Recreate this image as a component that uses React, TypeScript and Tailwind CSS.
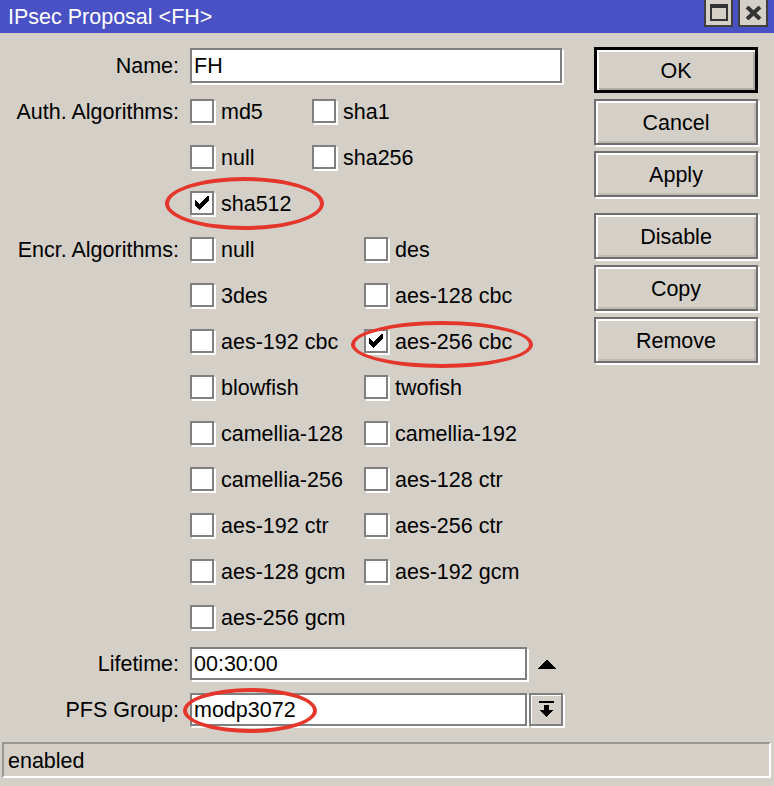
import React from "react";

type Item = { label: string; checked?: boolean };

const authRows: Item[][] = [
  [{ label: "md5" }, { label: "sha1" }],
  [{ label: "null" }, { label: "sha256" }],
  [{ label: "sha512", checked: true }],
];

const encrRows: Item[][] = [
  [{ label: "null" }, { label: "des" }],
  [{ label: "3des" }, { label: "aes-128 cbc" }],
  [{ label: "aes-192 cbc" }, { label: "aes-256 cbc", checked: true }],
  [{ label: "blowfish" }, { label: "twofish" }],
  [{ label: "camellia-128" }, { label: "camellia-192" }],
  [{ label: "camellia-256" }, { label: "aes-128 ctr" }],
  [{ label: "aes-192 ctr" }, { label: "aes-256 ctr" }],
  [{ label: "aes-128 gcm" }, { label: "aes-192 gcm" }],
  [{ label: "aes-256 gcm" }],
];

// glyphs sit high in the line box, nudge text down to match the boxes
const txt = "pt-[4px]";

function CheckBox({ checked }: { checked?: boolean }) {
  return (
    <div className="w-6 h-6 shrink-0 bg-white border-2 border-[#808080] shadow-[2px_2px_0_#fff] flex items-center justify-center">
      {checked && (
        <svg width="14" height="14" viewBox="0 0 7 7" shapeRendering="crispEdges">
          <polygon points="0,2 2,4 6,0 7,0 7,2 3,6 2,7 0,5" fill="#000" />
        </svg>
      )}
    </div>
  );
}

function Row({ label, children }: { label?: string; children: React.ReactNode }) {
  return (
    <div className="flex h-[46px] items-center">
      <div className={`w-[179px] text-right whitespace-nowrap ${txt}`}>{label}</div>
      <div className="ml-[11px] flex items-center">{children}</div>
    </div>
  );
}

function Checks({ items, colWidth }: { items: Item[]; colWidth: string }) {
  return (
    <>
      {items.map((it) => (
        <div key={it.label} className={`flex items-center ${colWidth}`}>
          <CheckBox checked={it.checked} />
          <span className={`ml-[7px] whitespace-nowrap ${txt}`}>{it.label}</span>
        </div>
      ))}
    </>
  );
}

function WinButton({ label, def }: { label: string; def?: boolean }) {
  return (
    <div
      className={`w-[164px] h-[46px] flex items-center justify-center bg-[#d4d0c8] ${
        def
          ? "border-[3px] border-black shadow-[inset_2px_2px_0_#fff,inset_-2px_-2px_0_#b0ada6]"
          : "border-2 border-[#6e6e6e] shadow-[inset_2px_2px_0_#fff,inset_-2px_-2px_0_#c0bcb4,2px_2px_0_#fff]"
      }`}
    >
      <span className={txt}>{label}</span>
    </div>
  );
}

export default function App() {
  return (
    <div className="relative w-[774px] h-[786px] bg-[#d4d0c8] text-black text-[21.5px] leading-none font-['Liberation_Sans',Arial,sans-serif] overflow-hidden">
      {/* title bar */}
      <div className="h-[33px] bg-[#4a51c5] flex items-center justify-between pl-2 pr-[6px]">
        <span className="text-white pt-[2px]">IPsec Proposal &lt;FH&gt;</span>
        <div className="flex gap-[5px] self-start">
          <div className="w-[29px] h-[27px] bg-[#d4d0c8] border-2 border-t-0 border-[#404040] flex items-center justify-center">
            <div className="w-[18px] h-[17px] border-2 border-t-[4px] border-[#333]" />
          </div>
          <div className="w-[30px] h-[27px] bg-[#d4d0c8] border-2 border-t-0 border-[#404040] flex items-center justify-center">
            <svg width="17" height="14" viewBox="0 0 17 14">
              <path d="M2 1 L15 13 M15 1 L2 13" stroke="#333" strokeWidth="4" />
            </svg>
          </div>
        </div>
      </div>

      <div className="flex">
        {/* form */}
        <div className="w-[594px] pt-[9px]">
          <Row label="Name:">
            <div className="w-[372px] h-[35px] bg-white border-2 border-[#808080] shadow-[2px_2px_0_#fff] flex items-center pl-[2px]">
              <span className={txt}>FH</span>
            </div>
          </Row>
          {authRows.map((r, i) => (
            <Row key={"a" + i} label={i === 0 ? "Auth. Algorithms:" : undefined}>
              <Checks items={r} colWidth="w-[122px]" />
            </Row>
          ))}
          {encrRows.map((r, i) => (
            <Row key={"e" + i} label={i === 0 ? "Encr. Algorithms:" : undefined}>
              <Checks items={r} colWidth="w-[174px]" />
            </Row>
          ))}
          <Row label="Lifetime:">
            <div className="w-[337px] h-[33px] bg-white border-2 border-[#808080] shadow-[2px_2px_0_#fff] flex items-center pl-[2px]">
              <span className={txt}>00:30:00</span>
            </div>
            <svg className="ml-[10px] mt-[2px]" width="20" height="9" viewBox="0 0 20 9" shapeRendering="crispEdges">
              <polygon points="10,0 20,9 0,9" fill="#000" />
            </svg>
          </Row>
          <Row label="PFS Group:">
            <div className="w-[337px] h-[33px] bg-white border-2 border-[#808080] shadow-[2px_2px_0_#fff] flex items-center pl-[2px]">
              <span className={txt}>modp3072</span>
            </div>
            <div className="ml-[2px] w-[34px] h-[33px] border-2 border-[#808080] shadow-[2px_2px_0_#fff,inset_1px_1px_0_#fff] flex items-center justify-center">
              <svg width="15" height="16" viewBox="0 0 15 16" shapeRendering="crispEdges">
                <rect x="0" y="0" width="15" height="2" fill="#000" />
                <rect x="5" y="4" width="5" height="5" fill="#000" />
                <polygon points="0,9 15,9 7.5,16" fill="#000" />
              </svg>
            </div>
          </Row>
        </div>

        {/* buttons */}
        <div className="pt-[14px] flex flex-col gap-[6px]">
          <WinButton label="OK" def />
          <WinButton label="Cancel" />
          <WinButton label="Apply" />
          <div className="mt-[10px] flex flex-col gap-[6px]">
            <WinButton label="Disable" />
            <WinButton label="Copy" />
            <WinButton label="Remove" />
          </div>
        </div>
      </div>

      {/* status bar */}
      <div className="mt-[10px] ml-[2px] mr-[3px] h-[36px] border-2 border-[#9a9893] border-r-white border-b-white flex items-center pl-[4px]">
        <span className={txt}>enabled</span>
      </div>

      {/* red annotation ellipses */}
      <div className="absolute left-[165px] top-[177px] w-[159px] h-[53px] rounded-[50%] border-[4px] border-[#e5362b]" />
      <div className="absolute left-[351px] top-[321px] w-[182px] h-[47px] rounded-[50%] border-[4px] border-[#e5362b]" />
      <div className="absolute left-[183px] top-[688px] w-[134px] h-[45px] rounded-[50%] border-[4px] border-[#e5362b]" />
    </div>
  );
}
